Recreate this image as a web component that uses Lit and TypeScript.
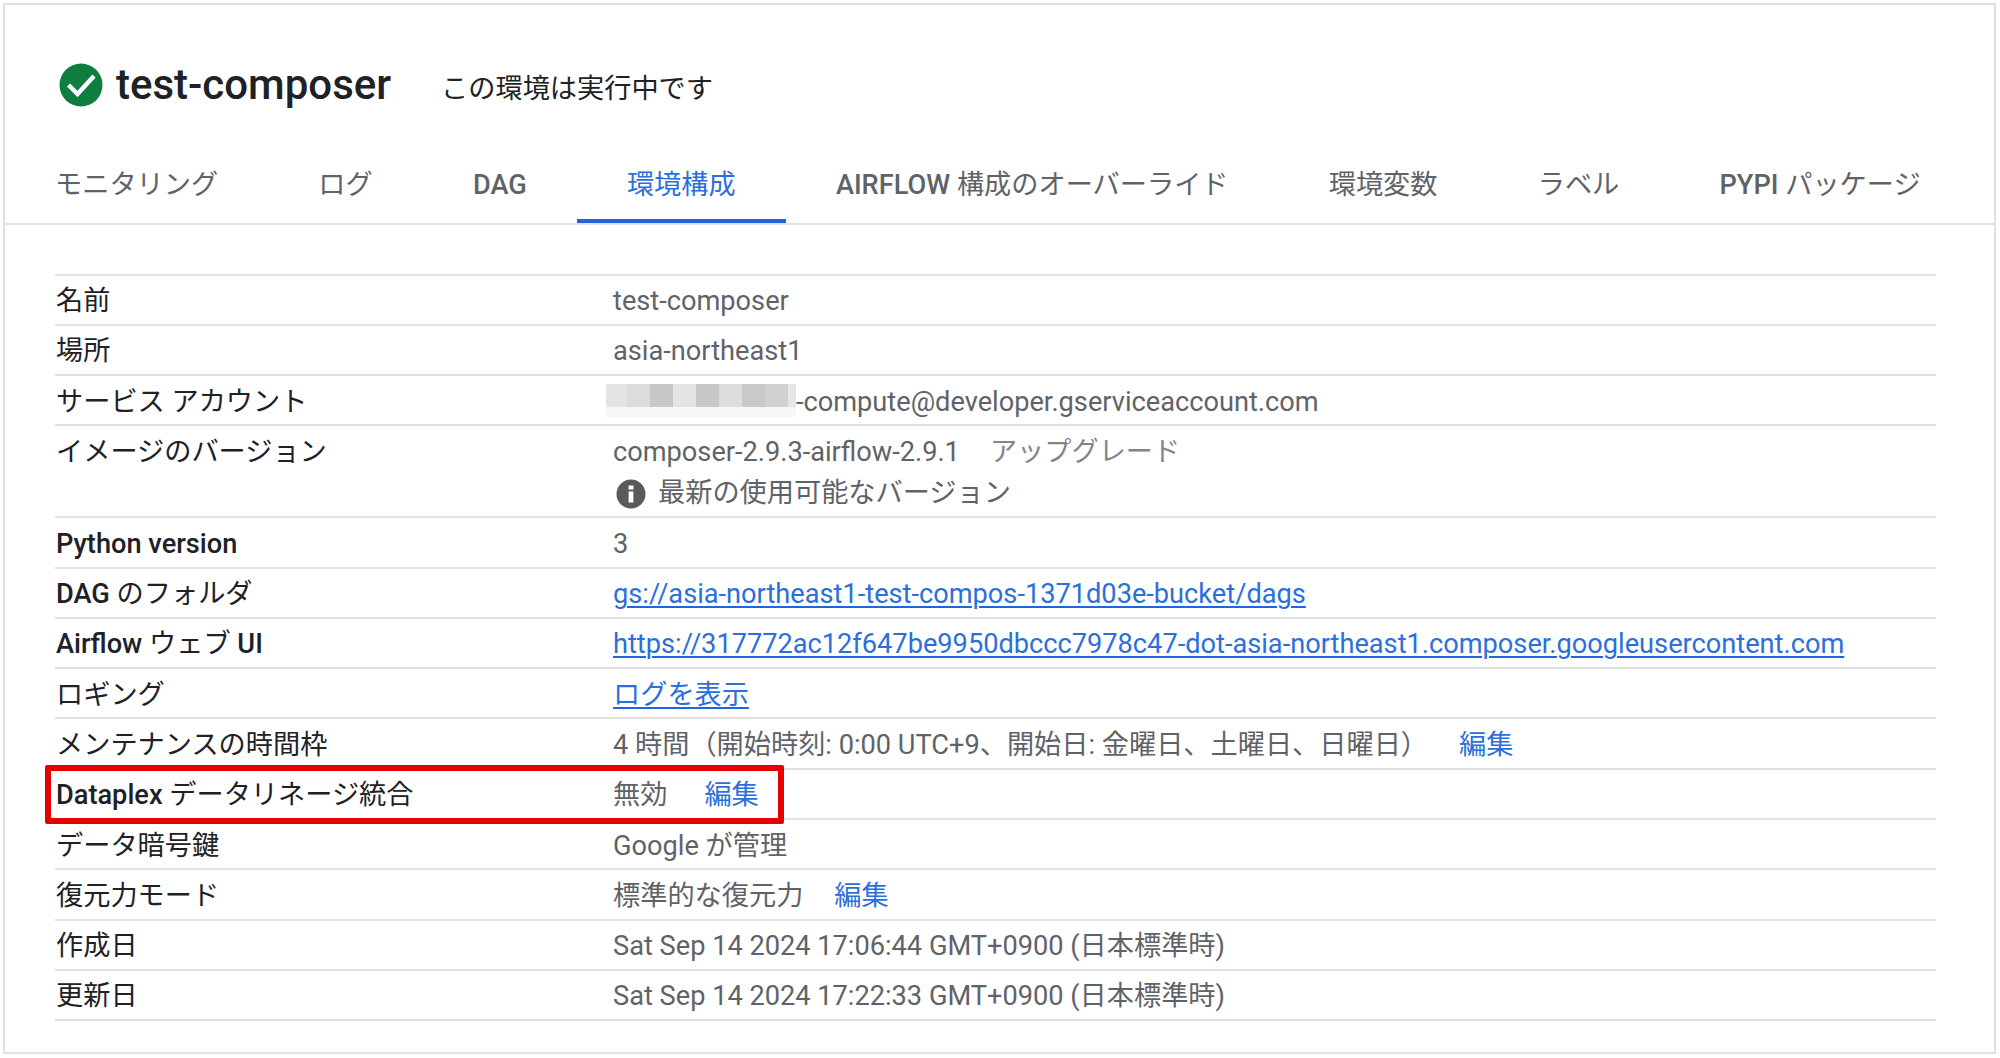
import { LitElement, html, css, svg } from "lit";
import { customElement } from "lit/decorators.js";

const tabs: [string, string][] = [
  ["", "モニタリング"],
  ["", "ログ"],
  ["DAG", ""],
  ["", "環境構成"],
  ["AIRFLOW", " 構成のオーバーライド"],
  ["", "環境変数"],
  ["", "ラベル"],
  ["PYPI", " パッケージ"],
];

const blocks = ["#e3e3e3", "#dcdcdc", "#c8c8c8", "#e4e4e4", "#c8c8c8", "#dddddd", "#c9c9c9", "#d0d0d0", "#e6e6e6"];
const blockW = [21, 23, 23, 23, 23, 23, 23, 23, 8];

@customElement("app-root")
export class AppRoot extends LitElement {
  static styles = css`
    :host {
      display: block;
      width: 2000px;
      height: 1058px;
      box-sizing: border-box;
      padding: 3px 4px 4px 3px;
      background: #fff;
      font-family: Roboto, "Noto Sans CJK JP", sans-serif;
      font-size: 27.2px;
      line-height: 40px;
      color: #202124;
    }
    .frame {
      height: 100%;
      box-sizing: border-box;
      border: 2px solid #e0e0e0;
      display: flex;
      flex-direction: column;
    }
    .head {
      display: flex;
      align-items: center;
      height: 153px;
      padding: 7px 0 0 54px;
      flex: none;
      box-sizing: border-box;
    }
    .check { width: 44px; height: 44px; flex: none; }
    h1 {
      margin: 0 0 0 13px;
      font-size: 42px;
      font-weight: 500;
      color: #202124;
      line-height: 44px;
    }
    .status { margin-left: 50px; margin-top: 8px; }
    .tabs {
      display: flex;
      height: 65px;
      padding-left: 1px;
      border-bottom: 2px solid #e0e0e0;
      flex: none;
    }
    .tab {
      padding: 0 50.1px;
      line-height: 54px;
      color: #5f6368;
      white-space: pre;
      height: 65px;
      box-sizing: border-box;
    }
    .tab:first-child { padding-left: 49px; }
    .tab b, .strong b { font-weight: 500; }
    .tab.active { color: #2b6fdc; border-bottom: 4px solid #1f66dc; }
    .table {
      margin: 48.5px 58px 0 50px;
      border-top: 2px solid #e0e0e0;
    }
    .row {
      position: relative;
      display: flex;
      min-height: 50.28px;
      box-sizing: border-box;
      padding-top: 4.5px;
      border-bottom: 2px solid #e0e0e0;
      line-height: 43.78px;
    }
    .label {
      width: 558px;
      flex: none;
      box-sizing: border-box;
      padding-left: 1px;
      white-space: nowrap;
      color: #202124;
    }
    .value { color: #5f6368; white-space: nowrap; }
    a { color: #2b6fdc; text-decoration: none; }
    a.link {
      text-decoration: underline #1f66dc 2px;
      text-underline-offset: 3px;
    }
    .edit { margin-left: 37px; }
    .edit.near { margin-left: 31px; }
    .upgrade { margin-left: 30px; color: #80868b; }
    .multi { display: flex; flex-direction: column; }
    .note {
      display: flex;
      align-items: center;
      height: 41.7px;
      box-sizing: border-box;
      padding-bottom: 3px;
    }
    .info { width: 30px; height: 30px; margin: 0 12px 0 3px; flex: none; }
    .email { display: flex; }
    .redact {
      display: flex;
      flex-direction: column;
      margin: 3.5px 0 0 -7px;
      height: 33px;
    }
    .redact-top { display: flex; height: 23px; }
    .redact-fade { height: 10px; background: #f7f7f7; }
    .mark {
      position: absolute;
      left: -10px;
      top: -4.5px;
      width: 739px;
      height: 59px;
      box-sizing: border-box;
      border: 6px solid #e60000;
      border-radius: 2px;
      pointer-events: none;
    }
  `;

  private row(label: unknown, value: unknown, extra: unknown = "") {
    return html`<div class="row"><div class="label">${label}</div><div class="value">${value}</div>${extra}</div>`;
  }

  render() {
    return html`
      <div class="frame">
        <div class="head">
          <svg class="check" viewBox="0 0 44 44">
            <circle cx="22" cy="22" r="21.5" fill="#0f7d3f"></circle>
            ${svg`<path d="M9.5 22l9 9 16.5-18" fill="none" stroke="#fff" stroke-width="4.5"></path>`}
          </svg>
          <h1>test-composer</h1>
          <div class="status">この環境は実行中です</div>
        </div>
        <div class="tabs">
          ${tabs.map(
            ([latin, jp], i) =>
              html`<div class="tab ${i === 3 ? "active" : ""}"><b>${latin}</b>${jp}</div>`
          )}
        </div>
        <div class="table">
          ${this.row("名前", "test-composer")}
          ${this.row("場所", "asia-northeast1")}
          ${this.row(
            "サービス アカウント",
            html`<div class="email">
              <div class="redact">
                <div class="redact-top">
                  ${blocks.map((c, i) => html`<span style="background:${c};width:${blockW[i]}px"></span>`)}
                </div>
                <div class="redact-fade"></div>
              </div>
              <span>-compute@developer.gserviceaccount.com</span>
            </div>`
          )}
          ${this.row(
            "イメージのバージョン",
            html`<div class="multi">
              <div>composer-2.9.3-airflow-2.9.1<span class="upgrade">アップグレード</span></div>
              <div class="note">
                <svg class="info" viewBox="0 0 30 30">
                  <circle cx="15" cy="15" r="14.5" fill="#5a5a5a"></circle>
                  <rect x="12.6" y="12.5" width="4.8" height="11" fill="#fff"></rect>
                  <rect x="12.6" y="6.5" width="4.8" height="4" fill="#fff"></rect>
                </svg>
                <span>最新の使用可能なバージョン</span>
              </div>
            </div>`
          )}
          ${this.row(html`<span class="strong"><b>Python version</b></span>`, "3")}
          ${this.row(
            html`<span class="strong"><b>DAG</b> のフォルダ</span>`,
            html`<a class="link">gs://asia-northeast1-test-compos-1371d03e-bucket/dags</a>`
          )}
          ${this.row(
            html`<span class="strong"><b>Airflow</b> ウェブ <b>UI</b></span>`,
            html`<a class="link">https://317772ac12f647be9950dbccc7978c47-dot-asia-northeast1.composer.googleusercontent.com</a>`
          )}
          ${this.row("ロギング", html`<a class="link">ログを表示</a>`)}
          ${this.row(
            "メンテナンスの時間枠",
            html`4 時間（開始時刻: 0:00 UTC+9、開始日: 金曜日、土曜日、日曜日）<a class="edit near">編集</a>`
          )}
          ${this.row(
            html`<span class="strong"><b>Dataplex</b> データリネージ統合</span>`,
            html`無効<a class="edit">編集</a>`,
            html`<div class="mark"></div>`
          )}
          ${this.row("データ暗号鍵", "Google が管理")}
          ${this.row("復元力モード", html`標準的な復元力<a class="edit near">編集</a>`)}
          ${this.row("作成日", "Sat Sep 14 2024 17:06:44 GMT+0900 (日本標準時)")}
          ${this.row("更新日", "Sat Sep 14 2024 17:22:33 GMT+0900 (日本標準時)")}
        </div>
      </div>
    `;
  }
}
